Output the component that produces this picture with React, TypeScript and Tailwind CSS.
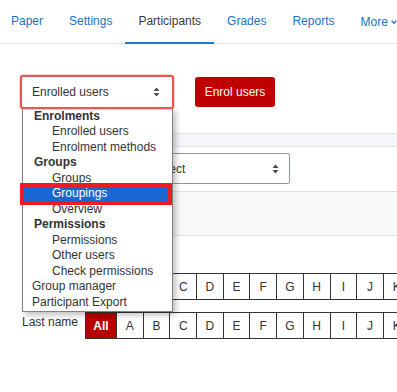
import React from 'react'

const tabs = ['Paper', 'Settings', 'Participants', 'Grades', 'Reports']
const letters = ['A', 'B', 'C', 'D', 'E', 'F', 'G', 'H', 'I', 'J', 'K']

type Opt = { label: string; kind: 'group' | 'child' | 'top'; selected?: boolean }

const options: Opt[] = [
  { label: 'Enrolments', kind: 'group' },
  { label: 'Enrolled users', kind: 'child' },
  { label: 'Enrolment methods', kind: 'child' },
  { label: 'Groups', kind: 'group' },
  { label: 'Groups', kind: 'child' },
  { label: 'Groupings', kind: 'child', selected: true },
  { label: 'Overview', kind: 'child' },
  { label: 'Permissions', kind: 'group' },
  { label: 'Permissions', kind: 'child' },
  { label: 'Other users', kind: 'child' },
  { label: 'Check permissions', kind: 'child' },
  { label: 'Group manager', kind: 'top' },
  { label: 'Participant Export', kind: 'top' },
]

function Arrows() {
  return (
    <svg width="7" height="10" viewBox="0 0 7 10" className="shrink-0">
      <path d="M0.5 4 L3.5 0.5 L6.5 4 Z" fill="#4a4a4a" />
      <path d="M0.5 6 L3.5 9.5 L6.5 6 Z" fill="#4a4a4a" />
    </svg>
  )
}

function LetterRow({ label }: { label: string }) {
  return (
    <div className="flex items-start">
      <div className="w-[63px] shrink-0 pt-[3px] text-[12px] leading-[14px] text-[#333]">{label}</div>
      <div className="flex h-[27px] border-y border-[#333]">
        <div className="w-[32px] shrink-0 flex items-center justify-center bg-[#b80000] border-x border-[#333] text-white font-bold text-[12px]">
          All
        </div>
        {letters.map((l) => (
          <div
            key={l}
            className="w-[26.7px] shrink-0 flex items-center justify-center border-r border-[#333] text-[12px] text-[#333]"
          >
            {l}
          </div>
        ))}
      </div>
    </div>
  )
}

export default function App() {
  return (
    <div
      className="relative w-[397px] h-[392px] overflow-hidden bg-white"
      style={{ fontFamily: '"Liberation Sans", Arial, sans-serif' }}
    >
      {/* tabs */}
      <div className="flex h-[44px] border-b border-[#dee2e6]">
        <div className="flex ml-[-2px]">
          {tabs.map((t) => {
            const active = t === 'Participants'
            return (
              <div
                key={t}
                className={
                  'h-[44px] -mb-px flex items-center px-[13px] text-[12px] border-b-[2.5px] ' +
                  (active ? 'border-[#1f78c8] text-[#3a3a3a]' : 'border-transparent text-[#1a72c4]')
                }
              >
                {t}
              </div>
            )
          })}
          <div className="h-[44px] flex items-center pl-[13px] text-[12px] text-[#1a72c4] gap-[3px]">
            More
            <svg width="6" height="4" viewBox="0 0 6 4">
              <polyline points="0.6,0.6 3,3.2 5.4,0.6" fill="none" stroke="#1a72c4" strokeWidth="1.3" />
            </svg>
          </div>
        </div>
      </div>

      <div className="pl-[22px]">
        {/* select + button */}
        <div className="flex items-center mt-[31px]">
          <div className="relative z-20 -ml-[2px] w-[154px] h-[34px] rounded-[3px] border-2 border-[#ee5252] bg-white flex items-center justify-between pl-[10px] pr-[12px] text-[12px] text-[#333] shadow-[0_0_0_1px_rgba(238,82,82,0.25)]">
            Enrolled users
            <Arrows />
          </div>
          <div className="ml-[21px] h-[30px] w-[80px] rounded-[3px] bg-[#be0000] text-white text-[12px] flex items-center justify-center">
            Enrol users
          </div>
        </div>

        {/* filter card background */}
        <div className="mt-[24px] h-[14px] border-y border-[#dee2e6] bg-[#f5f6f7]" />
        <div className="flex mt-[6px]">
          <div className="w-[119px] shrink-0" />
          <div className="w-[149px] h-[31px] border border-[#8f959e] rounded-[2px] flex items-center justify-between pl-[10px] pr-[10px] text-[12px] text-[#333]">
            Select
            <Arrows />
          </div>
        </div>
        <div className="mt-[7px] h-[45px] border-y border-[#dee2e6] bg-[#f8f9fa]" />

        {/* initials */}
        <div className="mt-[37px]">
          <LetterRow label="" />
        </div>
        <div className="mt-[12px]">
          <LetterRow label="Last name" />
        </div>

        <div className="mt-[54px] border-t border-[#dee2e6]" />
      </div>

      {/* open select list */}
      <div className="absolute z-10 left-[22px] top-[107.5px] w-[151px] bg-white border border-[#808080] pb-[1px] shadow-[3px_3px_6px_rgba(0,0,0,0.25)]">
        {options.map((o, i) => (
          <div
            key={i}
            className={
              'h-[15.5px] leading-[15.5px] text-[12px] whitespace-nowrap ' +
              (o.kind === 'group'
                ? 'pl-[11px] font-bold text-[#333]'
                : o.kind === 'child'
                  ? 'pl-[29px] text-[#333]'
                  : 'pl-[9px] text-[#333]') +
              (o.selected ? ' bg-[#1967d2] text-white' : '')
            }
          >
            {o.label}
          </div>
        ))}
      </div>

      {/* highlight box round Groupings */}
      <div className="absolute z-30 left-[20px] top-[183px] w-[152px] h-[22px] border-[4.5px] border-[#ed1c24]" />
    </div>
  )
}
